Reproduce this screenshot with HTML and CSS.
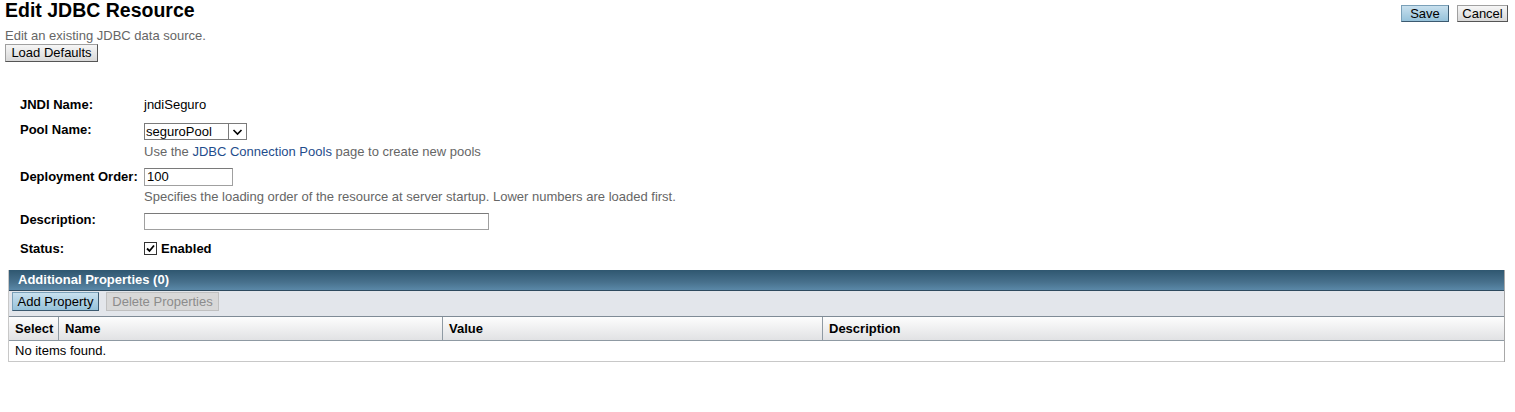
FILE: index.html
```html
<!DOCTYPE html>
<html>
<head>
<meta charset="utf-8">
<link rel="stylesheet" href="styles.css">
</head>
<body>
<div class="page">
  <div class="top">
    <div class="titles">
      <h1 class="title">Edit JDBC Resource</h1>
      <div class="subtitle">Edit an existing JDBC data source.</div>
      <button class="btn">Load Defaults</button>
    </div>
    <div class="actions">
      <button class="btn primary">Save</button>
      <button class="btn">Cancel</button>
    </div>
  </div>

  <div class="form">
    <div class="row r-jndi">
      <div class="label">JNDI Name:</div>
      <div class="value">jndiSeguro</div>
    </div>
    <div class="row r-pool">
      <div class="label">Pool Name:</div>
      <div class="value">
        <div class="select"><span class="sel-text">seguroPool</span><span class="sel-arrow"><svg width="11" height="8" viewBox="0 0 11 8"><path d="M1.5 2 L5.5 6 L9.5 2" fill="none" stroke="#000" stroke-width="1.6"/></svg></span></div>
        <div class="help">Use the <a class="link">JDBC Connection Pools</a> page to create new pools</div>
      </div>
    </div>
    <div class="row r-order">
      <div class="label">Deployment Order:</div>
      <div class="value">
        <div class="input short">100</div>
        <div class="help">Specifies the loading order of the resource at server startup. Lower numbers are loaded first.</div>
      </div>
    </div>
    <div class="row r-desc">
      <div class="label">Description:</div>
      <div class="value"><div class="input long"></div></div>
    </div>
    <div class="row r-status">
      <div class="label">Status:</div>
      <div class="value check"><span class="box"><svg width="11" height="11" viewBox="0 0 11 11"><path d="M2 5.5 L4.5 8 L9 2.5" fill="none" stroke="#000" stroke-width="1.8"/></svg></span><span class="bold">Enabled</span></div>
    </div>
  </div>

  <div class="table">
    <div class="t-title">Additional Properties (0)</div>
    <div class="t-bar">
      <button class="btn primary">Add Property</button>
      <button class="btn disabled">Delete Properties</button>
    </div>
    <div class="t-head">
      <div class="c c1">Select</div>
      <div class="c c2">Name</div>
      <div class="c c3">Value</div>
      <div class="c c4">Description</div>
    </div>
    <div class="t-empty">No items found.</div>
  </div>
</div>
</body>
</html>
```
FILE: styles.css
```css
html, body { margin: 0; padding: 0; background: #fff; }
body { font-family: "Liberation Sans", Arial, sans-serif; font-size: 13px; line-height: 15px; color: #000; }
.page { padding: 0 10px 0 5px; }
.top { display: flex; justify-content: space-between; align-items: flex-start; }
.title { font-size: 19.5px; font-weight: bold; margin: 0; line-height: 21px; }
.subtitle { color: #666; margin-top: 7px; line-height: 15px; }
.btn {
  font-family: "Liberation Sans", Arial, sans-serif; font-size: 13px;
  height: 18px; padding: 0; margin: 0; line-height: 14px;
  border: 1px solid #6b6b6b; border-color: #a0a0a0 #555 #555 #a0a0a0;
  background: linear-gradient(#f6f6f6, #d8d8d8); color: #000; display: block;
}
.titles .btn { margin-top: 1px; width: 93px; }
.actions { display: flex; gap: 8px; padding-top: 5px; margin-right: -3px; }
.actions .btn { height: 17px; }
.actions .btn.primary { width: 48px; }
.actions .btn:not(.primary) { width: 51px; }
.btn.primary { background: linear-gradient(#c8e0ee, #96c2da); border-color: #7aa0b8 #3c5a70 #3c5a70 #7aa0b8; }
.btn.disabled { color: #8c8c8c; background: #d8d8d8; border-color: #c0c0c0; }

.form { padding-left: 15px; margin-top: 34px; }
.row { display: flex; }
.label { width: 124px; font-weight: bold; flex: none; }
.value { flex: none; }
.r-jndi { height: 25px; padding-top: 1px; box-sizing: border-box; }
.r-pool { height: 47px; }
.r-pool .label { padding-top: 1px; }
.select { width: 101px; height: 15px; border: 1px solid #7a7a7a; display: flex; background: #fff; margin-top: 2px; }
.sel-text { flex: 1; padding-left: 1px; line-height: 15px; }
.sel-arrow { width: 17px; border-left: 1px solid #7a7a7a; display: flex; align-items: center; justify-content: center; }
.r-pool .help { margin-top: 4px; }
.help { color: #666; }
.link { color: #1f4d8c; }
.r-order { height: 43px; }
.r-order .label { padding-top: 1px; }
.input { border: 1px solid #a0a0a0; border-top-color: #7a7a7a; height: 16px; background: #fff; line-height: 16px; padding-left: 2px; box-sizing: content-box; }
.input.short { width: 85px; }
.input.long { width: 341px; height: 15px; margin-top: 2px; }
.r-order .help { margin-top: 3px; }
.r-desc { height: 29px; }
.r-desc .label { padding-top: 1px; }
.r-status { height: 30px; padding-top: 1px; box-sizing: border-box; }
.check { display: flex; align-items: center; height: 15px; }
.box { width: 11px; height: 11px; border: 1px solid #333; display: inline-flex; margin-right: 4px; background: #fff; }
.bold { font-weight: bold; }

.table { margin-left: 3px; border-right: 1px solid #a8a8a8; border-left: 1px solid #c8c8c8; }
.t-title { height: 21px; line-height: 20px; padding-left: 9px; color: #fff; font-weight: bold;
  background: linear-gradient(#2f5770, #47708c 60%, #5a88a8); border-bottom: 1px solid #2e4a5e; box-sizing: border-box; }
.t-bar { background: #e3e6eb; height: 26px; display: flex; gap: 7px; padding: 1px 0 0 3px; box-sizing: border-box; border-bottom: 1px solid #7f8b96; }
.t-bar .btn { height: 19px; }
.t-bar .btn.primary { width: 87px; }
.t-bar .btn.disabled { width: 113px; }
.t-head { display: flex; height: 24px; background: linear-gradient(#fdfdfd, #e1e2e4); border-bottom: 1px solid #8f9aa3; box-sizing: border-box; font-weight: bold; }
.c { line-height: 23px; padding-left: 6px; box-sizing: border-box; border-right: 1px solid #8f9aa3; }
.c1 { width: 50px; }
.c2 { width: 384px; }
.c3 { width: 380px; }
.c4 { flex: 1; border-right: none; }
.t-empty { height: 21px; line-height: 20px; padding-left: 6px; border-bottom: 1px solid #c8c8c8; box-sizing: border-box; }
```
